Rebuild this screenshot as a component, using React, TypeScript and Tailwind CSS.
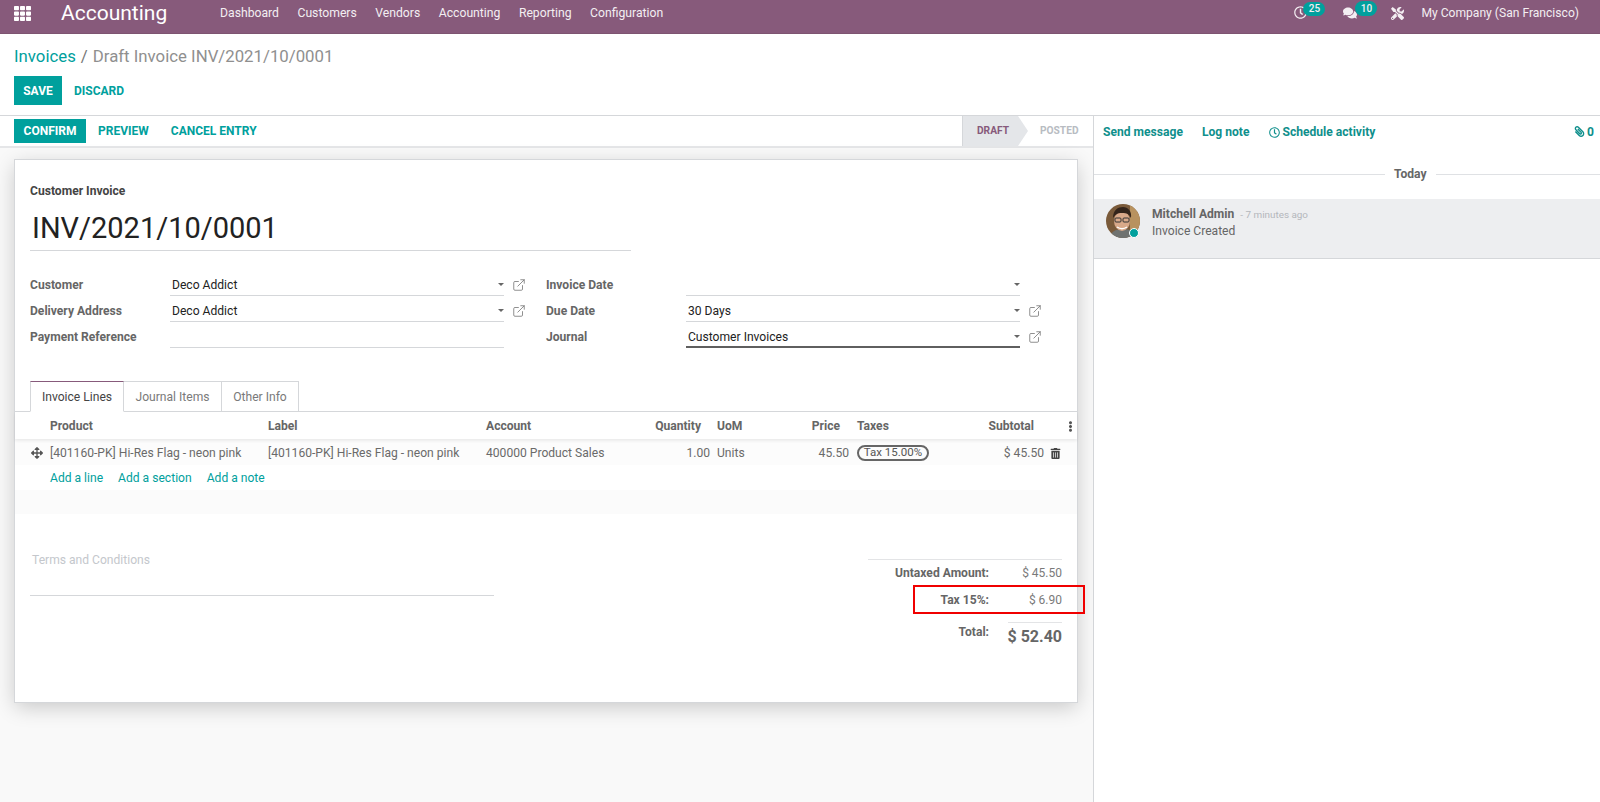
import React from "react";
import { FaTh, FaRegClock, FaComments, FaTools, FaArrowsAlt, FaEllipsisV, FaPaperclip, FaTrashAlt } from "react-icons/fa";
import { ExternalLink } from "lucide-react";

function Field({ value, ext = true, dark = false }: { value?: string; ext?: boolean; dark?: boolean }) {
  return (
    <div className="flex items-center h-full">
      <div className={`w-[334px] shrink-0 h-full flex items-end justify-between border-b ${dark ? "border-b-2 border-[#5f5f5f] pb-0" : "border-[#d5d7da] pb-[1px]"} pl-[2px]`}>
        <span className="text-[12.1px] leading-[18px] text-[#222]">{value}</span>
        <span className="w-0 h-0 border-l-[3px] border-r-[3px] border-t-[3px] border-l-transparent border-r-transparent border-t-[#666] mb-[8px]" />
      </div>
      <div className="w-[30px] flex justify-center shrink-0 pt-[3px]">
        {ext && <ExternalLink size={14} strokeWidth={1.4} className="text-[#777]" />}
      </div>
    </div>
  );
}

function Label({ children }: { children: React.ReactNode }) {
  return <div className="text-[12.1px] font-bold text-[#666] h-full flex items-end pb-[2px] leading-[18px]">{children}</div>;
}

function Avatar() {
  return (
    <div className="relative w-[34px] h-[34px] shrink-0">
      <svg viewBox="0 0 34 34" className="w-[34px] h-[34px] rounded-full">
        <rect width="34" height="34" fill="#7a5a3a" />
        <rect x="24" y="0" width="10" height="34" fill="#b8925f" />
        <path d="M4 34c1-7 6-9 13-9s12 2 13 9z" fill="#6f7270" />
        <ellipse cx="16" cy="17" rx="8" ry="10" fill="#d9a98a" />
        <path d="M7 14c0-8 5-11 10-11s9 4 8 11c-2-4-4-5-9-5s-7 2-9 5z" fill="#33241b" />
        <rect x="9" y="14" width="6" height="4" rx="1" fill="none" stroke="#333" strokeWidth="1" />
        <rect x="17" y="14" width="6" height="4" rx="1" fill="none" stroke="#333" strokeWidth="1" />
        <path d="M11 23c3 2 7 2 10 0" stroke="#fff" strokeWidth="1.5" fill="none" />
      </svg>
      <span className="absolute right-[1px] bottom-[0px] w-[10px] h-[10px] rounded-full bg-[#00A09D] border border-white" />
    </div>
  );
}

export default function App() {
  return (
    <div className="w-[1600px] h-[802px] overflow-hidden flex flex-col bg-white font-['Roboto',sans-serif] text-[12.1px] text-[#666]">
      {/* Navbar */}
      <div className="h-[34px] shrink-0 bg-[#875A7B] flex items-center text-white border-b border-[#7d5471]">
        <FaTh size={17} className="ml-[14px] -mt-[7px] text-white" />
        <div className="ml-[30px] text-[21px] leading-none -mt-[7px] w-[159px]">Accounting</div>
        <div className="flex gap-[18.5px] text-[12.2px] text-[#f3eef2] -mt-[6px]">
          <span>Dashboard</span>
          <span>Customers</span>
          <span>Vendors</span>
          <span>Accounting</span>
          <span>Reporting</span>
          <span>Configuration</span>
        </div>
        <div className="ml-auto flex items-center -mt-[6px] text-[#f3eef2]">
          <div className="relative w-[14px] h-[14px] mr-[35px]">
            <FaRegClock size={13} />
            <span className="absolute left-[9px] -top-[4px] w-[22px] h-[14px] rounded-full bg-[#00A09D] text-[10px] font-medium flex items-center justify-center leading-none">25</span>
          </div>
          <div className="relative w-[14px] h-[14px] mr-[34px]">
            <FaComments size={14} />
            <span className="absolute left-[12px] -top-[5px] w-[22px] h-[15px] rounded-full bg-[#00A09D] text-[10px] font-medium flex items-center justify-center leading-none">10</span>
          </div>
          <FaTools size={13} className="mr-[17px]" />
          <span className="mr-[21px]">My Company (San Francisco)</span>
        </div>
      </div>

      {/* Control panel */}
      <div className="h-[82px] shrink-0 bg-white border-b border-[#d5d7da] px-[14px]">
        <div className="h-[42px] flex items-center text-[16.8px] pt-[4px]">
          <span className="text-[#00A09D]">Invoices</span>
          <span className="text-[#777] mx-[5px]">/</span>
          <span className="text-[#8f8f8f]">Draft Invoice INV/2021/10/0001</span>
        </div>
        <div className="flex items-center">
          <div className="w-[48px] h-[29px] bg-[#00A09D] text-white text-[12px] font-bold flex items-center justify-center">SAVE</div>
          <div className="ml-[12px] text-[#00A09D] text-[12px] font-bold">DISCARD</div>
        </div>
      </div>

      <div className="flex flex-1 min-h-0">
        {/* Left */}
        <div className="w-[1094px] shrink-0 bg-[#f9f9f9] border-r border-[#d5d7da] flex flex-col">
          <div className="h-[32px] shrink-0 bg-white border-b-2 border-[#e5e6e8] flex items-start pl-[14px]">
            <div className="mt-[3px] w-[72px] h-[24px] bg-[#00A09D] text-white text-[12px] font-bold flex items-center justify-center">CONFIRM</div>
            <div className="ml-[12px] mt-[3px] h-[24px] flex items-center text-[#00A09D] text-[12px] font-bold">PREVIEW</div>
            <div className="ml-[22px] mt-[3px] h-[24px] flex items-center text-[#00A09D] text-[12px] font-bold">CANCEL ENTRY</div>
            <div className="ml-auto flex h-[30px]">
              <div className="relative w-[56px] bg-[#e4e6e9] border-l border-[#d5d7da] flex items-center pl-[14px] text-[10.2px] font-bold text-[#875A7B]">
                DRAFT
                <span className="absolute left-full top-0 w-0 h-0 border-t-[15px] border-b-[15px] border-l-[10px] border-t-transparent border-b-transparent border-l-[#e4e6e9]" />
              </div>
              <div className="w-[75px] flex items-center pl-[22px] text-[10.2px] font-bold text-[#b8bcc2]">POSTED</div>
            </div>
          </div>

          {/* Sheet */}
          <div className="ml-[14px] mt-[11px] w-[1064px] h-[544px] shrink-0 bg-white border border-[#d5d7da] shadow-[0_5px_20px_-1px_rgba(0,0,0,0.2)] flex flex-col">
            <div className="px-[15px] pt-[23px]">
              <div className="text-[12.1px] font-bold text-[#444] leading-[16px]">Customer Invoice</div>
              <div className="mt-[11px] w-[601px] h-[41px] border-b border-[#d5d7da] text-[29px] leading-[36px] text-[#222] pl-[2px]">INV/2021/10/0001</div>
              <div className="mt-[20px] flex">
                <div className="w-[516px] grid grid-cols-[140px_1fr] grid-rows-[25px_26px_26px]">
                  <Label>Customer</Label>
                  <Field value="Deco Addict" />
                  <Label>Delivery Address</Label>
                  <Field value="Deco Addict" />
                  <Label>Payment Reference</Label>
                  <div className="h-full w-[334px] border-b border-[#d5d7da]" />
                </div>
                <div className="w-[506px] grid grid-cols-[140px_1fr] grid-rows-[25px_26px_26px]">
                  <Label>Invoice Date</Label>
                  <Field ext={false} />
                  <Label>Due Date</Label>
                  <Field value="30 Days" />
                  <Label>Journal</Label>
                  <Field value="Customer Invoices" dark />
                </div>
              </div>
            </div>

            {/* Tabs */}
            <div className="mt-[33px] h-[31px] shrink-0 border-b border-[#d5d7da] flex pl-[15px]">
              <div className="w-[94px] h-[31px] pt-[1px] bg-white border border-[#d5d7da] border-t-[#875A7B] border-b-white flex items-center justify-center text-[#444]">Invoice Lines</div>
              <div className="w-[98px] h-[30px] pt-[2px] border-r border-t border-[#d5d7da] flex items-center justify-center text-[#7a7a7a]">Journal Items</div>
              <div className="w-[77px] h-[30px] pt-[2px] border-r border-t border-[#d5d7da] flex items-center justify-center text-[#7a7a7a]">Other Info</div>
            </div>

            {/* Table */}
            <div className="h-[27px] pt-[1px] shrink-0 flex items-center font-bold text-[12.1px] text-[#666] shadow-[0_2px_3px_rgba(0,0,0,0.07)] relative">
              <div className="w-[35px]" />
              <div className="w-[218px]">Product</div>
              <div className="w-[218px]">Label</div>
              <div className="w-[125px]">Account</div>
              <div className="w-[90px] text-right">Quantity</div>
              <div className="w-[62px] pl-[16px]">UoM</div>
              <div className="w-[77px] text-right">Price</div>
              <div className="w-[17px]" />
              <div className="w-[177px] flex justify-between">
                <span>Taxes</span>
                <span>Subtotal</span>
              </div>
              <FaEllipsisV size={11} className="ml-[31px] text-[#555]" />
            </div>
            <div className="h-[26px] shrink-0 flex items-center bg-[#fcfcfc] text-[12.1px] text-[#6a6a6a] pt-[2px]">
              <div className="w-[35px] flex justify-center pl-[9px]"><FaArrowsAlt size={12} className="text-[#555]" /></div>
              <div className="w-[218px]">[401160-PK] Hi-Res Flag - neon pink</div>
              <div className="w-[218px]">[401160-PK] Hi-Res Flag - neon pink</div>
              <div className="w-[125px] whitespace-nowrap">400000 Product Sales</div>
              <div className="w-[99px] text-right">1.00</div>
              <div className="w-[53px] pl-[7px]">Units</div>
              <div className="w-[86px] text-right">45.50</div>
              <div className="w-[8px]" />
              <div className="w-[72px] h-[16px] rounded-full border-2 border-[#666] text-[11.5px] flex items-center justify-center text-[#555] leading-none shrink-0">Tax 15.00%</div>
              <div className="w-[115px] text-right">$ 45.50</div>
              <FaTrashAlt size={11} className="ml-[6px] text-[#444]" />
            </div>
            <div className="h-[25px] shrink-0 flex items-center pl-[35px] gap-[15px] text-[12.1px] text-[#00A09D] pt-[1px]">
              <span>Add a line</span>
              <span>Add a section</span>
              <span>Add a note</span>
            </div>
            <div className="h-[24px] shrink-0 bg-[#fbfbfb]" />

            <div className="flex-1 flex pl-[15px] pr-[15px]">
              <div className="w-[464px] h-[82px] border-b border-[#d5d7da] pt-[38px] pl-[2px] text-[12.1px] leading-[16px] text-[#c4c7cc]">Terms and Conditions</div>
              <div className="ml-auto w-[194px] mt-[45px] border-t border-[#e3e4e6] h-fit">
                <div className="flex h-[26px] items-center">
                  <div className="w-[121px] text-right font-bold text-[12.1px] text-[#666]">Untaxed Amount:</div>
                  <div className="flex-1 text-right text-[#7a7a7a] text-[12px]">$ 45.50</div>
                </div>
                <div className="relative flex h-[28px] items-center">
                  <div className="w-[121px] text-right font-bold text-[12.1px] text-[#666]">Tax 15%:</div>
                  <div className="flex-1 text-right text-[#7a7a7a] text-[12px]">$ 6.90</div>
                  <div className="absolute left-[45px] right-[-23px] top-[-1px] h-[29px] border-2 border-[#f00000]" />
                </div>
                <div className="ml-[140px] mt-[8px] border-t border-[#e3e4e6]" />
                <div className="flex h-[28px]">
                  <div className="w-[121px] text-right font-bold text-[12.1px] text-[#666]">Total:</div>
                  <div className="flex-1 text-right text-[16px] font-bold text-[#666] pt-[2px]">$ 52.40</div>
                </div>
              </div>
            </div>
          </div>
        </div>

        {/* Chatter */}
        <div className="flex-1 bg-white flex flex-col">
          <div className="h-[32px] shrink-0 flex items-center pl-[9px] pr-[6px] font-bold text-[12.1px] text-[#0f8f8c]">
            <span>Send message</span>
            <span className="ml-[19px]">Log note</span>
            <FaRegClock size={11} className="ml-[20px] mr-[2px]" />
            <span>Schedule activity</span>
            <span className="ml-auto flex items-center gap-[2px]"><FaPaperclip size={11} className="-scale-x-100" />0</span>
          </div>
          <div className="mt-[17px] flex items-center">
            <div className="w-[291px] border-t border-[#dfe1e4]" />
            <span className="mx-[9px] font-bold text-[12.1px] text-[#666]">Today</span>
            <div className="flex-1 border-t border-[#dfe1e4]" />
          </div>
          <div className="mt-[16px] h-[60px] bg-[#edeef0] border-b border-[#d5d7da] flex pl-[12px] pt-[5px]">
            <Avatar />
            <div className="ml-[12px] pt-[1px]">
              <div className="flex items-baseline h-[17px] leading-[18px]">
                <span className="font-bold text-[12.1px] text-[#666]">Mitchell Admin</span>
                <span className="ml-[6px] text-[9.9px] text-[#b4b7bc]">- 7 minutes ago</span>
              </div>
              <div className="text-[12.1px] text-[#666] leading-[18px]">Invoice Created</div>
            </div>
          </div>
        </div>
      </div>
    </div>
  );
}
